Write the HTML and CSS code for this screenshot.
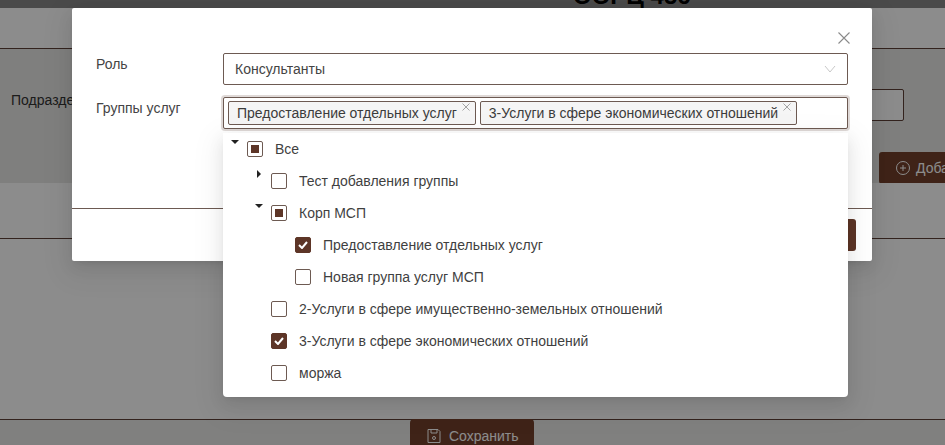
FILE: index.html
```html
<!DOCTYPE html>
<html lang="ru">
<head>
<meta charset="utf-8">
<title>Роль и группы услуг</title>
<link rel="stylesheet" href="styles.css">
</head>
<body>
<div class="page">
  <header class="topbar"><div class="page-title">ООРЦ 456</div></header>
  <div class="band-top"></div>
  <section class="filters">
    <div class="filter-row">
      <span class="filter-label">Подразделение</span>
      <div class="filter-input"></div>
    </div>
    <div class="filter-actions">
      <button class="btn btn-add" type="button">
        <svg class="btn-icon" viewBox="0 0 16 16" width="16" height="16"><circle cx="8" cy="8" r="6.500"/><path d="M8 5v6M5 8h6"/></svg>
        Добавить
      </button>
    </div>
  </section>
  <div class="band-mid"></div>
  <div class="content"></div>
  <footer class="footer">
    <button class="btn btn-save" type="button">
      <svg class="btn-icon" viewBox="0 0 16 16" width="16" height="16"><path d="M2 1.500h10l2 2v11h-12z"/><path d="M5 1.500v3.500h6v-3.500"/><circle cx="8" cy="10" r="1.500"/></svg>
      Сохранить
    </button>
  </footer>
</div>

<div class="mask"></div>

<div class="modal">
  <button class="modal-close" type="button" aria-label="Закрыть">
    <svg viewBox="0 0 12 12" width="12" height="12"><path d="M.5.5l11 11M11.500.5l-11 11"/></svg>
  </button>
  <div class="modal-body">
    <div class="form-row">
      <label class="form-label">Роль</label>
      <div class="select">
        <span>Консультанты</span>
        <svg class="chevron" viewBox="0 0 12 8" width="12" height="8"><path d="M1 1l5 6 5-6"/></svg>
      </div>
    </div>
    <div class="form-row">
      <label class="form-label">Группы услуг</label>
      <div class="select select-multi">
        <span class="tag">Предоставление отдельных услуг<svg class="tag-x" viewBox="0 0 8 8" width="8" height="8"><path d="M.5.5l7 7M7.500.5l-7 7"/></svg></span>
        <span class="tag">3-Услуги в сфере экономических отношений<svg class="tag-x" viewBox="0 0 8 8" width="8" height="8"><path d="M.5.5l7 7M7.500.5l-7 7"/></svg></span>
      </div>
    </div>
  </div>
  <div class="modal-footer"><div class="modal-ok"></div></div>
</div>

<div class="dropdown">
  <div class="node lvl0"><span class="arrow down"></span><span class="cb partial"></span><span class="node-text">Все</span></div>
  <div class="node lvl1"><span class="arrow right"></span><span class="cb"></span><span class="node-text">Тест добавления группы</span></div>
  <div class="node lvl1"><span class="arrow down"></span><span class="cb partial"></span><span class="node-text">Корп МСП</span></div>
  <div class="node lvl2"><span class="arrow none"></span><span class="cb checked"><svg viewBox="0 0 10 8" width="10" height="8"><path d="M1 4l3 3 5-6"/></svg></span><span class="node-text">Предоставление отдельных услуг</span></div>
  <div class="node lvl2"><span class="arrow none"></span><span class="cb"></span><span class="node-text">Новая группа услуг МСП</span></div>
  <div class="node lvl1"><span class="arrow none"></span><span class="cb"></span><span class="node-text">2-Услуги в сфере имущественно-земельных отношений</span></div>
  <div class="node lvl1"><span class="arrow none"></span><span class="cb checked"><svg viewBox="0 0 10 8" width="10" height="8"><path d="M1 4l3 3 5-6"/></svg></span><span class="node-text">3-Услуги в сфере экономических отношений</span></div>
  <div class="node lvl1"><span class="arrow none"></span><span class="cb"></span><span class="node-text">моржа</span></div>
</div>
</body>
</html>
```
FILE: styles.css
```css
* { box-sizing: border-box; }
html, body { margin: 0; height: 100%; overflow: hidden; }
body { font-family: "Liberation Sans", Arial, sans-serif; font-size: 14px; color: #3f3f3f; background: #fff; }

.page { width: 945px; height: 445px; display: flex; flex-direction: column; overflow: hidden; }
.topbar { height: 8px; flex: none; background: #888; overflow: hidden; display: flex; }
.page-title { margin: -18px 0 0 573px; flex: none; font-size: 24px; font-weight: 700; line-height: 28px; color: #000; white-space: nowrap; }
.band-top { flex: none; height: 41px; background: #fff; border-bottom: 1px solid #5d4037; }
.filters { flex: none; height: 134px; background: #e7e7e5; display: flex; flex-direction: column; padding: 40px 41px 0 11px; }
.filter-row { display: flex; justify-content: space-between; align-items: flex-start; }
.filter-label { margin-top: 3px; font-size: 14px; line-height: 16px; color: #333; }
.filter-input { width: 200px; height: 32px; border: 1px solid #5d4037; border-radius: 2px; background: #fff; }
.filter-actions { display: flex; margin: 31px 0 0 868px; width: 200px; }
.btn { display: inline-flex; align-items: center; gap: 5px; font: 14px "Liberation Sans", Arial, sans-serif; color: #fff; background: #74412d; border: 0; border-radius: 3px; white-space: nowrap; flex: none; }
.btn-add { height: 32px; width: 120px; padding: 0 16px; }
.btn-icon { fill: none; stroke: currentColor; stroke-width: 1; flex: none; }
.band-mid { flex: none; height: 56px; background: #fff; border-bottom: 1px solid #5d4037; }
.content { flex: none; height: 181px; background: #fff; border-bottom: 1px solid #5d4037; }
.footer { flex: 1; background: #e9e9e8; padding-left: 410px; }
.btn-save { height: 34px; width: 124px; padding: 0 16px; gap: 7px; margin-top: -1px; border-radius: 4px 4px 0 0; }

.mask { position: absolute; inset: 0; background: rgba(0, 0, 0, .45); }

.modal { position: absolute; left: 72px; top: 8px; width: 800px; height: 253px; background: #fff; border-radius: 2px; display: flex; flex-direction: column; box-shadow: 0 6px 16px 0 rgba(0,0,0,.08), 0 3px 6px -4px rgba(0,0,0,.12), 0 9px 28px 8px rgba(0,0,0,.05); }
.modal-close { position: absolute; left: 766px; top: 24px; width: 12px; height: 12px; padding: 0; border: 0; background: none; display: flex; }
.modal-close svg { fill: none; stroke: #8a8a8a; stroke-width: 1.100; }
.modal-body { flex: none; height: 201px; padding: 45px 24px 0; display: flex; flex-direction: column; gap: 12px; border-bottom: 1px solid #6d5a52; }
.form-row { display: flex; }
.form-label { width: 127px; flex: none; padding-top: 3px; line-height: 16px; font-size: 14px; color: #444; }
.select { width: 625px; height: 32px; border: 1px solid #6d5a52; border-radius: 2px; background: #fff; display: flex; align-items: center; justify-content: space-between; padding: 0 11px 0 11px; color: #444; line-height: 20px; }
.chevron { fill: none; stroke: #c8c8c8; stroke-width: 1; }
.select-multi { justify-content: flex-start; gap: 4px; padding: 0 4px; box-shadow: 0 0 0 2px rgba(93, 64, 55, .2); }
.tag { position: relative; height: 24px; display: flex; align-items: center; padding: 0 18px 0 8px; background: #f5f5f5; border: 1px solid #6d5a52; border-radius: 2px; color: #3c3c3c; white-space: nowrap; }
.tag-x { position: absolute; right: 5px; top: 1px; fill: none; stroke: #9a9a9a; stroke-width: .9; }
.modal-footer { flex: 1; position: relative; }
.modal-ok { position: absolute; right: 16px; top: 10px; width: 120px; height: 32px; background: #5d3527; border-radius: 3px; }

.dropdown { position: absolute; left: 223px; top: 133px; width: 625px; height: 264px; background: #fff; border-radius: 0 0 4px 4px; box-shadow: 0 3px 6px -4px rgba(0,0,0,.12), 0 6px 16px 0 rgba(0,0,0,.08), 0 9px 28px 8px rgba(0,0,0,.05); }
.node { height: 32px; display: flex; align-items: center; position: relative; color: #3f3f3f; white-space: nowrap; }
.lvl0 { padding-left: 6px; }
.lvl1 { padding-left: 30px; }
.lvl2 { padding-left: 54px; }
.arrow { width: 18px; height: 16px; flex: none; position: relative; }
.arrow.down::before { content: ""; position: absolute; left: 2px; top: -1px; border-left: 4px solid transparent; border-right: 4px solid transparent; border-top: 4px solid #222; }
.arrow.right::before { content: ""; position: absolute; left: 4px; top: -3px; border-top: 4px solid transparent; border-bottom: 4px solid transparent; border-left: 4px solid #222; }
.cb { width: 16px; height: 16px; flex: none; border: 1px solid #6d5a52; border-radius: 2px; background: #fff; display: flex; align-items: center; justify-content: center; }
.cb.partial::after { content: ""; width: 8px; height: 8px; background: #5d3527; }
.cb.checked { background: #5d3527; border-color: #5d3527; }
.cb.checked svg { fill: none; stroke: #fff; stroke-width: 2; }
.node-text { margin-left: 12px; line-height: 20px; }
```
